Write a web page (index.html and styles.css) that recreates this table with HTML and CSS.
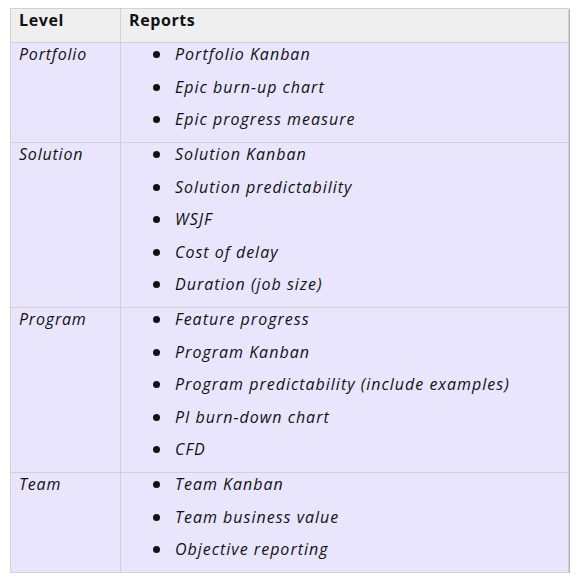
FILE: index.html
```html
<!DOCTYPE html>
<html>
<head>
<meta charset="utf-8">
<link rel="stylesheet" href="styles.css">
</head>
<body>
<table class="grid">
  <thead>
    <tr><th class="col-level">Level</th><th class="col-reports">Reports</th></tr>
  </thead>
  <tbody>
    <tr>
      <td class="level">Portfolio</td>
      <td class="reports"><ul>
        <li>Portfolio Kanban</li>
        <li>Epic burn-up chart</li>
        <li>Epic progress measure</li>
      </ul></td>
    </tr>
    <tr>
      <td class="level">Solution</td>
      <td class="reports"><ul>
        <li>Solution Kanban</li>
        <li>Solution predictability</li>
        <li>WSJF</li>
        <li>Cost of delay</li>
        <li>Duration (job size)</li>
      </ul></td>
    </tr>
    <tr>
      <td class="level">Program</td>
      <td class="reports"><ul>
        <li>Feature progress</li>
        <li>Program Kanban</li>
        <li>Program predictability (include examples)</li>
        <li>PI burn-down chart</li>
        <li>CFD</li>
      </ul></td>
    </tr>
    <tr>
      <td class="level">Team</td>
      <td class="reports"><ul>
        <li>Team Kanban</li>
        <li>Team business value</li>
        <li>Objective reporting</li>
      </ul></td>
    </tr>
  </tbody>
</table>
</body>
</html>
```
FILE: styles.css
```css
html, body { margin: 0; padding: 0; background: #ffffff; }
body { padding: 8px 0 0 10px; font-family: "Open Sans", "DejaVu Sans", sans-serif; color: #111; }
.grid {
  border-collapse: collapse;
  width: 559px;
  table-layout: fixed;
  box-shadow: 1px 1px 0 #b4b4b4;
}
.grid th, .grid td {
  border: 1px solid #d2d2d2;
  vertical-align: top;
  text-align: left;
  padding: 0 8px;
}
.col-level { width: 93px; }
.grid th {
  background: #efefef;
  font-weight: 700;
  font-size: 16px;
  line-height: 22px;
  letter-spacing: 0.6px;
  padding-top: 0;
  padding-bottom: 11px;
}
.grid td {
  background: #e8e5fd;
  font-style: italic;
  font-size: 16px;
  line-height: 22px;
  padding-bottom: 1.5px;
}
.level { letter-spacing: 0.8px; }
.grid ul { margin: 0; padding: 0 0 0 46px; list-style: none; }
.grid li { position: relative; margin-bottom: 10.5px; letter-spacing: 1px; }
.grid li::before {
  content: "";
  position: absolute;
  left: -22px;
  top: 8px;
  width: 7px;
  height: 7px;
  border-radius: 50%;
  background: #111;
}
```
